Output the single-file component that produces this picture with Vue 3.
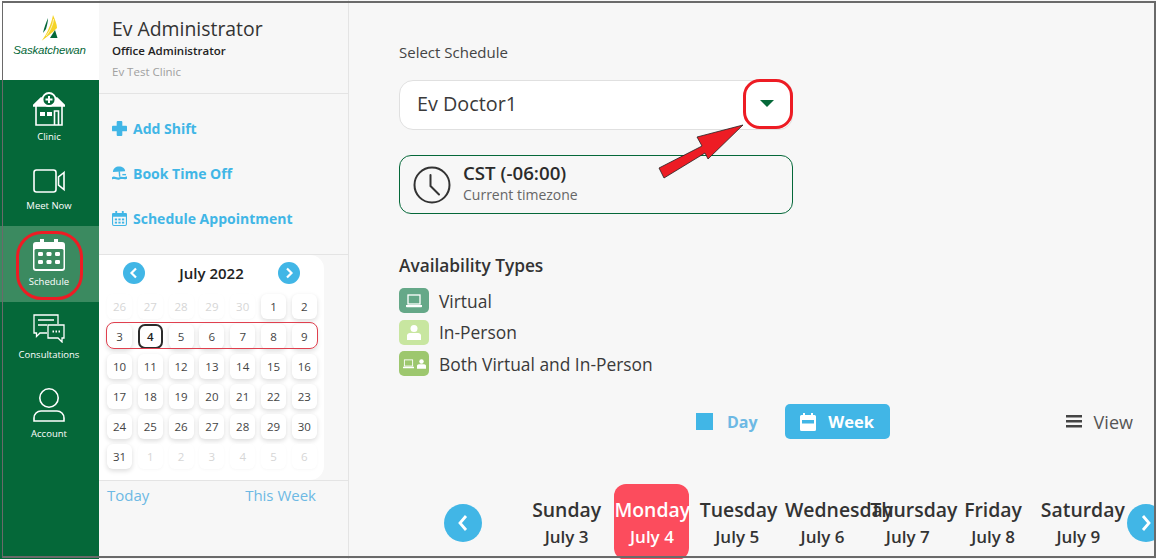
<script setup>
const navItems = [
  { label: 'Clinic', icon: 'clinic' },
  { label: 'Meet Now', icon: 'video' },
  { label: 'Schedule', icon: 'schedule', active: true },
  { label: 'Consultations', icon: 'chat' },
  { label: 'Account', icon: 'user' }
]

const leading = [26, 27, 28, 29, 30].map(n => ({ n, off: true }))
const month = Array.from({ length: 31 }, (_, i) => ({ n: i + 1, off: false, today: i === 3 }))
const trailing = [1, 2, 3, 4, 5, 6].map(n => ({ n, off: true }))
const calendarDays = [...leading, ...month, ...trailing]

const weekDays = [
  { name: 'Sunday', date: 'July 3' },
  { name: 'Monday', date: 'July 4', current: true },
  { name: 'Tuesday', date: 'July 5' },
  { name: 'Wednesday', date: 'July 6' },
  { name: 'Thursday', date: 'July 7' },
  { name: 'Friday', date: 'July 8' },
  { name: 'Saturday', date: 'July 9' }
]
</script>

<template>
  <div class="page">
    <aside class="sidebar">
      <div class="logo">
        <svg width="24" height="26" viewBox="0 0 24 26">
          <path d="M10 3 C8 8 6 13 5 18 L8 14 C9 10 10 7 10 3 Z" fill="#056839" />
          <path d="M15 0 C17 5 19 9 19 13 C15 17 9 22 3.700 25.700 C9 19 13 10 15 0 Z" fill="#f5d327" />
          <path d="M15.500 4 C15 10 12 16 8 21" fill="none" stroke="#fff" stroke-width=".7" />
          <path d="M17 15 L12 23 L19.500 23 Z" fill="#056839" />
        </svg>
        <span class="logo-text">Saskatchewan</span>
      </div>
      <nav class="nav">
        <div v-for="item in navItems" :key="item.label" class="nav-item" :class="'nav-' + item.icon">
          <svg v-if="item.icon === 'clinic'" width="32" height="34" viewBox="0 0 32 34" fill="none" stroke="#fff" stroke-width="1.6">
            <path d="M0 14 L8 6 L24 6 L32 14 Z" fill="#fff" />
            <circle cx="16" cy="7.500" r="6.500" fill="#056839" stroke="#fff" stroke-width="1.800" />
            <path d="M16 4v7M12.500 7.500h7" stroke-width="2" />
            <path d="M3 14v19h26V14" />
            <rect x="7" y="20" width="5" height="4" fill="#fff" stroke="none" />
            <rect x="14" y="20" width="5" height="4" fill="#fff" stroke="none" />
            <path d="M21.500 33V19h4v14" />
          </svg>
          <svg v-else-if="item.icon === 'video'" width="32" height="24" viewBox="0 0 32 24" fill="none" stroke="#fff" stroke-width="1.600">
            <rect x="1" y="1" width="22" height="22" rx="2.500" />
            <path d="M31 3.500 L25.500 8 V16 L31 20.500 Z" />
          </svg>
          <svg v-else-if="item.icon === 'schedule'" width="32" height="32" viewBox="0 0 32 32">
            <path d="M3 3h4V0h4v3h10V0h4v3h4a3 3 0 0 1 3 3v23a3 3 0 0 1-3 3H3a3 3 0 0 1-3-3V6a3 3 0 0 1 3-3Z" fill="#fff" />
            <rect x="1.500" y="10" width="29" height="20" rx="1.500" fill="#3b8a60" />
            <g fill="#fff">
              <rect x="5" y="13" width="5" height="4" rx="1.200" />
              <rect x="13.500" y="13" width="5" height="4" rx="1.200" />
              <rect x="22" y="13" width="5" height="4" rx="1.200" />
              <rect x="5" y="21" width="5" height="4" rx="1.200" />
              <rect x="13.500" y="21" width="5" height="4" rx="1.200" />
              <rect x="22" y="21" width="5" height="4" rx="1.200" />
            </g>
          </svg>
          <svg v-else-if="item.icon === 'chat'" width="32" height="29" viewBox="0 0 32 29" fill="none" stroke="#fff" stroke-width="1.300">
            <path d="M14 19H7l-3.500 3.500V19H1V1h24v9" />
            <path d="M5 6h16M5 11h9" />
            <path d="M15 11h16v13h-2v4l-4-4H15Z" />
            <path d="M19.500 17.500h1.500M22.500 17.500H24M25.500 17.500H27" stroke-width="1.800" />
          </svg>
          <svg v-else width="32" height="34" viewBox="0 0 32 34" fill="none" stroke="#fff" stroke-width="1.600">
            <circle cx="16" cy="10" r="9.200" />
            <path d="M8 23h16a7 7 0 0 1 7 7v3H1v-3a7 7 0 0 1 7-7Z" />
          </svg>
          <span class="nav-label">{{ item.label }}</span>
        </div>
      </nav>
    </aside>

    <section class="panel">
      <header class="profile">
        <div class="profile-name">Ev Administrator</div>
        <div class="profile-role">Office Administrator</div>
        <div class="profile-clinic">Ev Test Clinic</div>
      </header>

      <div class="actions">
        <a class="action">
          <svg width="15" height="15" viewBox="0 0 16 16" fill="#41b6e6">
            <path d="M6 0h4a1 1 0 0 1 1 1v4h4a1 1 0 0 1 1 1v4a1 1 0 0 1-1 1h-4v4a1 1 0 0 1-1 1H6a1 1 0 0 1-1-1v-4H1a1 1 0 0 1-1-1V6a1 1 0 0 1 1-1h4V1a1 1 0 0 1 1-1Z" />
          </svg>
          Add Shift
        </a>
        <a class="action">
          <svg width="15" height="14" viewBox="0 0 16 14" fill="#41b6e6">
            <path d="M1 6 C1 2 4 0 7.500 0 C11 0 14 2 14 5 Z" />
            <path d="M7 5 L8.500 5 L9 11 L7.500 11 Z" />
            <path d="M0 11.500 C3 9.500 5 13 8 11.500 C11 10 13 12.500 16 10.500 V13 C13 14.500 11 12.500 8 14 C5 15 3 12.500 0 14 Z" />
            <path d="M11 8h4v1.500h-4Z" />
          </svg>
          Book Time Off
        </a>
        <a class="action">
          <svg width="15" height="15" viewBox="0 0 16 16" fill="none">
            <path d="M1.500 2h13A1.500 1.500 0 0 1 16 3.500V6H0V3.500A1.500 1.500 0 0 1 1.500 2Z" fill="#41b6e6" />
            <path d="M3.500 0h2v3h-2ZM10.500 0h2v3h-2Z" fill="#41b6e6" />
            <rect x=".6" y="3" width="14.800" height="12.400" rx="1.500" stroke="#41b6e6" stroke-width="1.200" />
            <g fill="#41b6e6">
              <rect x="3" y="8" width="2.400" height="2" />
              <rect x="6.800" y="8" width="2.400" height="2" />
              <rect x="10.600" y="8" width="2.400" height="2" />
              <rect x="3" y="11.400" width="2.400" height="2" />
              <rect x="6.800" y="11.400" width="2.400" height="2" />
              <rect x="10.600" y="11.400" width="2.400" height="2" />
            </g>
          </svg>
          Schedule Appointment
        </a>
      </div>

      <div class="calendar">
        <div class="cal-head">
          <button class="cal-arrow">
            <svg width="10" height="12" viewBox="0 0 10 12" fill="none" stroke="#fff" stroke-width="2.200"><path d="M7 1.500 L2.500 6 L7 10.500" /></svg>
          </button>
          <span class="cal-title">July 2022</span>
          <button class="cal-arrow">
            <svg width="10" height="12" viewBox="0 0 10 12" fill="none" stroke="#fff" stroke-width="2.200"><path d="M3 1.500 L7.500 6 L3 10.500" /></svg>
          </button>
        </div>
        <div class="cal-grid">
          <div
            v-for="(d, i) in calendarDays"
            :key="i"
            class="cal-day"
            :class="{ off: d.off, today: d.today }"
          >{{ d.n }}</div>
          <div class="week-ring"></div>
        </div>
      </div>

      <div class="cal-links">
        <a>Today</a>
        <a>This Week</a>
      </div>
    </section>

    <main class="main">
      <div class="select-label">Select Schedule</div>
      <div class="select">
        <span>Ev Doctor1</span>
        <span class="caret"></span>
        <div class="caret-ring"></div>
        <svg class="arrow" width="88" height="56" viewBox="0 0 88 56">
          <path d="M86 2 L40 14 L45 23 L2 45 L7 55 L48 30 L51 36 Z" fill="#ed1c24" stroke="#222" stroke-width=".8" />
        </svg>
      </div>

      <div class="timezone">
        <svg width="38" height="38" viewBox="0 0 38 38" fill="none" stroke="#333" stroke-width="2">
          <circle cx="19" cy="19" r="17.500" />
          <path d="M17.500 9 V20 L26 28.500" stroke-linecap="round" />
        </svg>
        <div class="tz-text">
          <div class="tz-name">CST (-06:00)</div>
          <div class="tz-sub">Current timezone</div>
        </div>
      </div>

      <h3 class="types-title">Availability Types</h3>
      <ul class="types">
        <li>
          <span class="swatch virtual">
            <svg width="16" height="14" viewBox="0 0 16 14" fill="none">
              <rect x="2" y="1" width="12" height="9" stroke="#fff" stroke-width="1.300" />
              <path d="M0 11h16v1.500a.8.8 0 0 1-.8.8H.8a.8.8 0 0 1-.8-.8Z" fill="#fff" />
            </svg>
          </span>
          Virtual
        </li>
        <li>
          <span class="swatch person">
            <svg width="14" height="15" viewBox="0 0 14 15" fill="#fff">
              <circle cx="7" cy="3.500" r="3.500" />
              <path d="M3.500 8h7A3 3 0 0 1 14 11.500V15H0v-3.500A3 3 0 0 1 3.500 8Z" />
            </svg>
          </span>
          In-Person
        </li>
        <li>
          <span class="swatch both">
            <svg width="11" height="10" viewBox="0 0 16 14" fill="none">
              <rect x="2" y="1" width="12" height="9" stroke="#fff" stroke-width="1.300" />
              <path d="M0 11h16v1.500a.8.8 0 0 1-.8.8H.8a.8.8 0 0 1-.8-.8Z" fill="#fff" />
            </svg>
            <svg width="9" height="10" viewBox="0 0 14 15" fill="#fff">
              <circle cx="7" cy="3.500" r="3.500" />
              <path d="M3.500 8h7A3 3 0 0 1 14 11.500V15H0v-3.500A3 3 0 0 1 3.500 8Z" />
            </svg>
          </span>
          Both Virtual and In-Person
        </li>
      </ul>

      <div class="toolbar">
        <span class="day-icon"></span>
        <span class="day-label">Day</span>
        <button class="week-btn">
          <svg width="16" height="18" viewBox="0 0 16 18" fill="#fff">
            <path d="M3 0h2v2h6V0h2v2h1.500A1.500 1.500 0 0 1 16 3.500v13a1.500 1.500 0 0 1-1.500 1.500h-13A1.500 1.500 0 0 1 0 16.500v-13A1.500 1.500 0 0 1 1.500 2H3Z" />
            <rect x="2" y="7" width="12" height="3.500" fill="#41b6e6" />
          </svg>
          Week
        </button>
        <span class="view">
          <svg width="16" height="13" viewBox="0 0 16 13" fill="#444">
            <rect width="16" height="2.500" /><rect y="5" width="16" height="2.500" /><rect y="10" width="16" height="2.500" />
          </svg>
          View
        </span>
      </div>

      <div class="week-strip">
        <button class="strip-arrow">
          <svg width="14" height="18" viewBox="0 0 14 18" fill="none" stroke="#fff" stroke-width="2.800"><path d="M10 2 L4 9 L10 16" /></svg>
        </button>
        <div class="strip-days">
          <div v-for="d in weekDays" :key="d.name" class="strip-day" :class="{ current: d.current }">
            <div class="strip-name">{{ d.name }}</div>
            <div class="strip-date">{{ d.date }}</div>
          </div>
        </div>
        <button class="strip-arrow">
          <svg width="14" height="18" viewBox="0 0 14 18" fill="none" stroke="#fff" stroke-width="2.800"><path d="M4 2 L10 9 L4 16" /></svg>
        </button>
      </div>
    </main>

    <div class="frame"></div>
  </div>
</template>

<style scoped>
.page {
  position: relative;
  display: flex;
  width: 1156px;
  height: 559px;
  overflow: hidden;
  background: #f7f7f7;
  color: #333;
  font-family: "Open Sans", "Noto Sans", sans-serif;
}

.frame {
  position: absolute;
  top: 1px;
  left: 2px;
  right: 0;
  bottom: 1px;
  border: 2px solid #6a6a6a;
  border-left-width: 1px;
  pointer-events: none;
}

/* left green bar */
.sidebar {
  flex: 0 0 99px;
  display: flex;
  flex-direction: column;
  background: #056839;
}

.logo {
  height: 80px;
  background: #fff;
  display: flex;
  flex-direction: column;
  align-items: center;
  padding-top: 15px;
  box-sizing: border-box;
}

.logo-text {
  margin-top: 3px;
  font-family: "Liberation Sans", sans-serif;
  font-style: italic;
  font-size: 11.500px;
  letter-spacing: -0.2px;
  color: #056839;
}

.nav-item {
  position: relative;
  display: flex;
  flex-direction: column;
  align-items: center;
  box-sizing: border-box;
  padding-right: 1px;
  color: #fff;
}

.nav-label {
  font-size: 9.500px;
  line-height: 12px;
}

.nav-clinic {
  height: 76px;
  padding-top: 12px;
}

.nav-clinic .nav-label {
  margin-top: 5px;
}

.nav-video {
  height: 70px;
  padding-top: 13px;
}

.nav-video .nav-label {
  margin-top: 7px;
}

.nav-schedule {
  height: 76px;
  padding-top: 13px;
  background: #3b8a60;
}

.nav-schedule .nav-label {
  margin-top: 5px;
}

.nav-schedule::after {
  content: "";
  position: absolute;
  left: 16px;
  top: 5px;
  width: 67px;
  height: 69px;
  box-sizing: border-box;
  border: 3.500px solid #ed1c24;
  border-radius: 26px;
}

.nav-chat {
  height: 86px;
  padding-top: 12px;
}

.nav-chat .nav-label {
  margin-top: 6px;
}

.nav-user .nav-label {
  margin-top: 6px;
}

/* middle panel */
.panel {
  flex: 0 0 250px;
  box-sizing: border-box;
  display: flex;
  flex-direction: column;
  border-right: 1px solid #e4e4e4;
}

.profile {
  height: 94px;
  box-sizing: border-box;
  padding: 15px 0 0 13px;
  border-bottom: 1px solid #e4e4e4;
}

.profile-name {
  font-size: 19.400px;
  line-height: 27px;
}

.profile-role {
  font-size: 11.500px;
  font-weight: 600;
  line-height: 18px;
  color: #222;
}

.profile-clinic {
  margin-top: 4px;
  font-size: 11.500px;
  line-height: 16px;
  color: #a0a0a0;
}

.actions {
  height: 161px;
  box-sizing: border-box;
  padding: 19px 0 0 13px;
  display: flex;
  flex-direction: column;
  gap: 15px;
  border-bottom: 1px solid #e4e4e4;
}

.action {
  display: flex;
  align-items: center;
  gap: 6px;
  height: 30px;
  font-size: 14px;
  font-weight: 700;
  color: #41b6e6;
}

.calendar {
  width: 225px;
  height: 225px;
  box-sizing: border-box;
  background: #fff;
  border-radius: 0 14px 14px 0;
  padding: 0 0 0 8px;
}

.cal-head {
  height: 35px;
  display: flex;
  align-items: center;
  justify-content: space-between;
  padding: 0 24px 0 16px;
}

.cal-arrow {
  width: 22px;
  height: 22px;
  padding: 0;
  border: 0;
  border-radius: 50%;
  background: #41b6e6;
  display: flex;
  align-items: center;
  justify-content: center;
}

.cal-title {
  font-size: 15px;
  font-weight: 600;
  color: #222;
}

.cal-grid {
  position: relative;
  display: grid;
  grid-template-columns: repeat(7, 25px);
  grid-auto-rows: 25px;
  column-gap: 5.800px;
  row-gap: 5px;
  margin-top: 4px;
}

.cal-day {
  display: flex;
  align-items: center;
  justify-content: center;
  border-radius: 6px;
  font-size: 11.500px;
  color: #444;
  background: #fff;
  box-shadow: 0 2px 5px rgba(0, 0, 0, 0.14);
}

.cal-day.off {
  color: #d6d6d6;
  box-shadow: 0 1px 3px rgba(0, 0, 0, 0.03);
}

.cal-day.today {
  box-sizing: border-box;
  border: 2px solid #2b2b2b;
  border-radius: 7px;
  color: #222;
  font-weight: 600;
  box-shadow: none;
}

.week-ring {
  position: absolute;
  left: -1px;
  top: 28px;
  width: 212px;
  height: 27px;
  box-sizing: border-box;
  border: 1px solid #e0404f;
  border-radius: 8px;
  pointer-events: none;
}

.cal-links {
  flex: 1;
  display: flex;
  justify-content: space-between;
  padding: 4px 32px 0 8px;
  border-top: 1px solid #e4e4e4;
  font-size: 15px;
  color: #6db9e4;
}

/* right side */
.main {
  flex: 1;
  min-width: 0;
  padding: 43px 0 0 50px;
  box-sizing: border-box;
}

.select-label {
  font-size: 15px;
  line-height: 18px;
  color: #444;
}

.select {
  position: relative;
  width: 394px;
  height: 50px;
  margin-top: 19px;
  box-sizing: border-box;
  padding: 0 18px 4px 17px;
  display: flex;
  align-items: center;
  justify-content: space-between;
  background: #fff;
  border: 1px solid #e0e0e0;
  border-radius: 14px;
  font-size: 19.800px;
  color: #3a3a3a;
}

.caret {
  width: 0;
  height: 0;
  border-left: 7px solid transparent;
  border-right: 7px solid transparent;
  border-top: 7px solid #056839;
}

.caret-ring {
  position: absolute;
  right: -1px;
  top: -2px;
  width: 50px;
  height: 50px;
  box-sizing: border-box;
  border: 3.500px solid #ed1c24;
  border-radius: 17px;
}

.arrow {
  position: absolute;
  left: 257px;
  top: 42px;
}

.timezone {
  width: 394px;
  height: 59px;
  margin-top: 25px;
  box-sizing: border-box;
  padding: 0 13px;
  display: flex;
  align-items: center;
  gap: 12px;
  border: 1px solid #056839;
  border-radius: 12px;
}

.tz-name {
  font-size: 18.700px;
  font-weight: 600;
  line-height: 21px;
  color: #2b2b2b;
}

.tz-sub {
  font-size: 14px;
  line-height: 24px;
  color: #666;
}

.types-title {
  margin: 41px 0 0;
  font-size: 17.300px;
  font-weight: 600;
  line-height: 22px;
  color: #333;
}

.types {
  list-style: none;
  margin: 11px 0 0;
  padding: 0;
  display: flex;
  flex-direction: column;
  gap: 6.500px;
}

.types li {
  display: flex;
  align-items: center;
  gap: 10px;
  height: 25px;
  font-size: 17.400px;
  color: #3a3a3a;
}

.swatch {
  width: 30px;
  height: 25px;
  border-radius: 5px;
  display: flex;
  align-items: center;
  justify-content: center;
  gap: 3px;
}

.swatch.virtual {
  background: #65a888;
}

.swatch.person {
  background: #c8e6a0;
}

.swatch.both {
  background: #9dc76e;
}

.toolbar {
  display: flex;
  align-items: center;
  height: 35px;
  margin-top: 28px;
  padding-left: 297px;
}

.day-icon {
  flex: none;
  width: 17px;
  height: 17px;
  background: #41b6e6;
}

.day-label {
  margin-left: 14px;
  font-size: 16px;
  font-weight: 700;
  color: #6db9e4;
}

.week-btn {
  flex: none;
  width: 105px;
  height: 35px;
  margin-left: 27px;
  border: 0;
  border-radius: 5px;
  background: #41b6e6;
  color: #fff;
  font-family: inherit;
  font-size: 16.500px;
  font-weight: 700;
  display: flex;
  align-items: center;
  justify-content: center;
  gap: 12px;
}

.view {
  margin-left: 176px;
  display: flex;
  align-items: center;
  gap: 12px;
  font-size: 18px;
  color: #555;
}

.week-strip {
  display: flex;
  align-items: center;
  height: 76px;
  margin-top: 45px;
  padding-left: 45px;
}

.strip-arrow {
  flex: none;
  width: 38px;
  height: 38px;
  padding: 0;
  border: 0;
  border-radius: 50%;
  background: #41b6e6;
  display: flex;
  align-items: center;
  justify-content: center;
  margin-top: 2px;
}

.strip-days {
  flex: none;
  width: 597px;
  margin: 0 6px 0 42px;
  display: grid;
  grid-template-columns: repeat(7, minmax(0, 1fr));
}

.strip-day {
  height: 76px;
  display: flex;
  flex-direction: column;
  align-items: center;
  padding-top: 14px;
  box-sizing: border-box;
  color: #333;
}

.strip-day.current {
  width: 75px;
  justify-self: center;
  background: #fc4c5d;
  border-radius: 12px;
  color: #fff;
}

/* 75px wide like the red card, long names spill out to the right */
.strip-name {
  width: 75px;
  text-align: center;
  white-space: nowrap;
  font-size: 19.400px;
  font-weight: 600;
  line-height: 24px;
}

.strip-date {
  margin-top: 4px;
  font-size: 17px;
  font-weight: 600;
  line-height: 22px;
}
</style>
